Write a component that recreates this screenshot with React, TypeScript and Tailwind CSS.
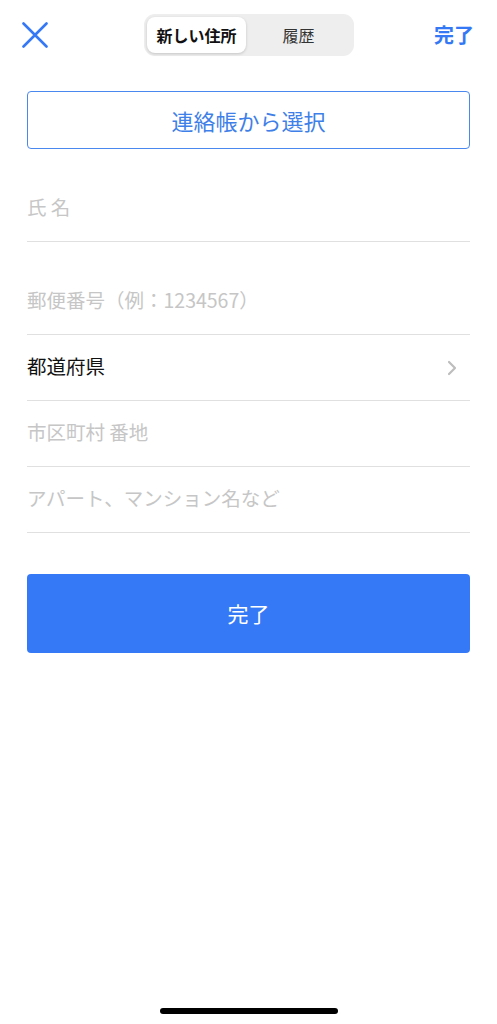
const FONT = { fontFamily: '"Noto Sans CJK JP", "Noto Sans", sans-serif' };

function Field({ label, placeholder = true, chevron = false, spaced = false }: { label: string; placeholder?: boolean; chevron?: boolean; spaced?: boolean }) {
  return (
    <div className={`flex items-center justify-between h-[66px] border-b border-[#e0e0e0] ${spaced ? 'mt-[27px]' : ''}`}>
      <span className={`text-[19.5px] leading-none pb-[3px] ${placeholder ? 'text-[#c6c6c6]' : 'text-[#111111]'}`}>{label}</span>
      {chevron && (
        <svg width="12" height="16" viewBox="0 0 12 16" className="mr-[12px]">
          <path d="M3 2 L9 8 L3 14" fill="none" stroke="#bdbdbd" strokeWidth="2.2" strokeLinecap="round" strokeLinejoin="round" />
        </svg>
      )}
    </div>
  );
}

export default function App() {
  return (
    <div className="w-[497px] h-[1024px] bg-white relative overflow-hidden" style={FONT}>
      {/* Header */}
      <div className="flex items-center justify-between h-[70px] pl-[22px] pr-[23px]">
        <svg width="26" height="26" viewBox="0 0 26 26">
          <path d="M1.5 1.5 L24.5 24.5 M24.5 1.5 L1.5 24.5" stroke="#3478f6" strokeWidth="2.6" strokeLinecap="round" />
        </svg>
        <div className="flex items-center w-[210px] h-[42px] rounded-[11px] bg-[#eeeeee] p-[3px] ml-[16px]">
          <div className="flex items-center justify-center w-[99px] h-full rounded-[8px] bg-white shadow-[0_1px_3px_rgba(0,0,0,0.18)] text-[16px] font-bold text-[#111111]">
            新しい住所
          </div>
          <div className="flex-1 flex items-center justify-center text-[16px] text-[#333333]">履歴</div>
        </div>
        <span className="text-[20px] font-bold text-[#3478f6] leading-none">完了</span>
      </div>

      <div className="px-[27px] pt-[21px]">
        <button className="w-full h-[58px] border-[1.5px] border-[#4a88f0] rounded-[4px] text-[22px] text-[#3f7fe8] flex items-center justify-center">
          連絡帳から選択
        </button>

        <Field label="氏 名" spaced />
        <Field label="郵便番号（例：1234567）" spaced />
        <Field label="都道府県" placeholder={false} chevron />
        <Field label="市区町村 番地" />
        <Field label="アパート、マンション名など" />

        <button className="w-full h-[79px] mt-[41px] bg-[#3679f6] rounded-[4px] text-[21px] text-white flex items-center justify-center">
          完了
        </button>
      </div>

      <div className="absolute left-[160px] top-[1008px] w-[178px] h-[6px] rounded-full bg-black" />
    </div>
  );
}
